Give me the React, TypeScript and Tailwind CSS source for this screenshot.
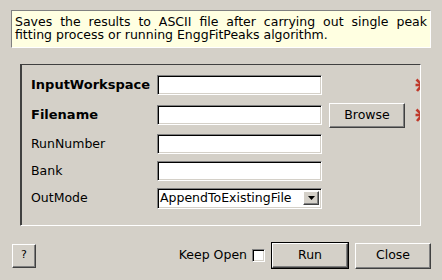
import React from "react";

const sunken =
  "bg-white border border-t-[#808080] border-l-[#808080] border-r-white border-b-white shadow-[inset_1px_1px_0_#000,inset_-1px_-1px_0_#d4d0c8]";
const raised =
  "bg-[#d4d0c8] border border-t-white border-l-white border-r-[#404040] border-b-[#404040] shadow-[inset_-1px_-1px_0_#808080]";

function Asterisk() {
  return (
    <svg width="20" height="16" viewBox="0 0 20 16" className="block shrink-0">
      <g stroke="#c0392b" strokeWidth="2.6" strokeLinecap="butt">
        <line x1="10" y1="8" x2="3.5" y2="8" />
        <line x1="10" y1="8" x2="4.5" y2="2.5" />
        <line x1="10" y1="8" x2="5" y2="14" />
        <line x1="10" y1="8" x2="16.5" y2="8" />
        <line x1="10" y1="8" x2="15.5" y2="2.5" />
        <line x1="10" y1="8" x2="15" y2="14" />
      </g>
    </svg>
  );
}

function Row({
  label,
  bold,
  h,
  children,
}: {
  label: string;
  bold?: boolean;
  h: string;
  children: React.ReactNode;
}) {
  return (
    <div className={`flex items-center shrink-0 ${h}`}>
      <div
        className={`w-[126px] shrink-0 whitespace-nowrap ${
          bold ? "font-bold text-[13px]" : "text-[12.5px]"
        } text-[#000]`}
      >
        {label}
      </div>
      {children}
    </div>
  );
}

export default function App() {
  return (
    <div className="w-[442px] h-[280px] bg-[#d4d0c8] font-['DejaVu_Sans',sans-serif] text-black overflow-hidden flex flex-col">
      <div className="pt-[10px] pl-[11px]">
        <div className="w-[420px] h-[38px] bg-[#ffffe1] border border-t-[#808080] border-l-[#808080] border-r-white border-b-white px-[3px] pt-[4px] text-[12.5px] leading-[13px] text-justify">
          Saves the results to ASCII file after carrying out single peak
          fitting process or running EnggFitPeaks algorithm.
        </div>
      </div>

      <div className="pt-[16px] pl-[20px]">
        <div className="w-[401px] h-[162px] border border-t-[#404040] border-l-[#404040] border-r-white border-b-white shadow-[inset_1px_0_0_#404040] overflow-hidden pt-[5px] pl-[10px]">
          <Row label="InputWorkspace" bold h="h-[30px]">
            <div className={`w-[165px] h-[20px] shrink-0 ${sunken}`} />
            <div className="w-[90px] shrink-0" />
            <Asterisk />
          </Row>
          <Row label="Filename" bold h="h-[30px]">
            <div className={`w-[165px] h-[20px] shrink-0 ${sunken}`} />
            <div className="w-[7px] shrink-0" />
            <button
              className={`w-[76px] h-[25px] shrink-0 ${raised} text-[12.5px] flex items-center justify-center`}
            >
              Browse
            </button>
            <div className="w-[7px] shrink-0" />
            <Asterisk />
          </Row>
          <Row label="RunNumber" h="h-[28px]">
            <div className={`w-[165px] h-[20px] shrink-0 ${sunken}`} />
          </Row>
          <Row label="Bank" h="h-[26px]">
            <div className={`w-[165px] h-[20px] shrink-0 ${sunken}`} />
          </Row>
          <Row label="OutMode" h="h-[28px]">
            <div
              className={`w-[165px] h-[21px] shrink-0 ${sunken} flex items-center justify-between pl-[2px] pr-[2px] text-[12.5px]`}
            >
              <span>AppendToExistingFile</span>
              <div
                className={`w-[16px] h-[14px] ${raised} flex items-center justify-center`}
              >
                <svg width="7" height="4" viewBox="0 0 7 4">
                  <polygon points="0,0 7,0 3.5,4" fill="#000" />
                </svg>
              </div>
            </div>
          </Row>
        </div>
      </div>

      <div className="flex items-center pl-[12px] pr-[11px] pt-[16px]">
        <button
          className={`w-[24px] h-[24px] ${raised} text-[11px] flex items-center justify-center`}
        >
          ?
        </button>
        <div className="flex-1" />
        <span className="text-[12.5px]">Keep Open</span>
        <div className={`w-[13px] h-[13px] ml-[5px] ${sunken}`} />
        <div className="w-[6px]" />
        <div className="w-[78px] h-[27px] border border-black">
          <button
            className={`w-full h-full ${raised} text-[12.5px] flex items-center justify-center`}
          >
            Run
          </button>
        </div>
        <div className="w-[6px]" />
        <button
          className={`w-[76px] h-[26px] ${raised} text-[12.5px] flex items-center justify-center`}
        >
          Close
        </button>
      </div>
    </div>
  );
}
